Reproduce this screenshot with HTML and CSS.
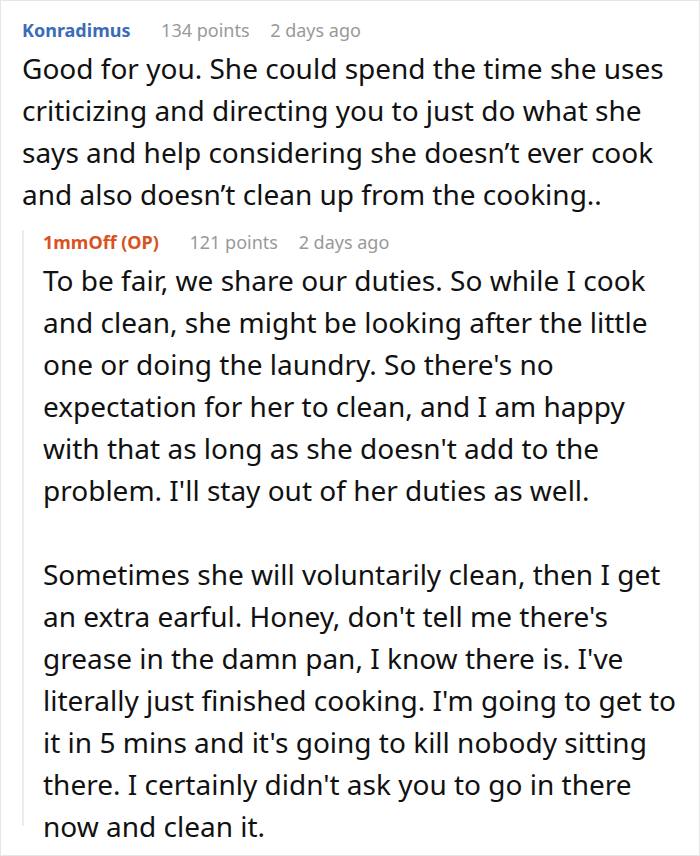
FILE: index.html
```html
<!DOCTYPE html>
<html>
<head>
<meta charset="utf-8">
<link rel="stylesheet" href="styles.css">
</head>
<body>
<div class="frame">
  <div class="comment">
    <div class="meta">
      <span class="user">Konradimus</span>
      <span class="points">134 points</span>
      <span class="time">2 days ago</span>
    </div>
    <div class="text">
      <p>Good for you. She could spend the time she uses<br>criticizing and directing you to just do what she<br>says and help considering she doesn’t ever cook<br>and also doesn’t clean up from the cooking..</p>
    </div>
    <div class="reply">
      <div class="meta">
        <span class="user op">1mmOff (OP)</span>
        <span class="points">121 points</span>
        <span class="time">2 days ago</span>
      </div>
      <div class="text">
        <p>To be fair, we share our duties. So while I cook<br>and clean, she might be looking after the little<br>one or doing the laundry. So there's no<br>expectation for her to clean, and I am happy<br>with that as long as she doesn't add to the<br>problem. I'll stay out of her duties as well.</p>
        <p>Sometimes she will voluntarily clean, then I get<br>an extra earful. Honey, don't tell me there's<br>grease in the damn pan, I know there is. I've<br>literally just finished cooking. I'm going to get to<br>it in 5 mins and it's going to kill nobody sitting<br>there. I certainly didn't ask you to go in there<br>now and clean it.</p>
      </div>
    </div>
  </div>
</div>
</body>
</html>
```
FILE: styles.css
```css
html, body {
  margin: 0;
  padding: 0;
  background: #ffffff;
}
.frame {
  width: 700px;
  height: 856px;
  box-sizing: border-box;
  border: 1px solid #e6e6e6;
  overflow: hidden;
  font-family: "Noto Sans", "Open Sans", sans-serif;
  color: #111111;
}
.comment {
  padding: 17px 0 0 21px;
}
.meta {
  font-size: 18px;
  line-height: 24px;
  height: 24px;
  white-space: nowrap;
}
.user {
  font-weight: 700;
  color: #3b6cb7;
  margin-right: 26px;
}
.user.op {
  color: #d9521e;
}
.points {
  color: #999999;
  margin-right: 16px;
}
.time {
  color: #999999;
}
.text {
  font-size: 28px;
  line-height: 42px;
  margin-top: 5px;
  white-space: nowrap;
}
.text p {
  margin: 0;
}
.text p + p {
  margin-top: 42px;
}
.reply {
  margin-top: 15px;
  border-left: 2px solid #ececec;
  padding-left: 19px;
  height: 596px;
}
```
